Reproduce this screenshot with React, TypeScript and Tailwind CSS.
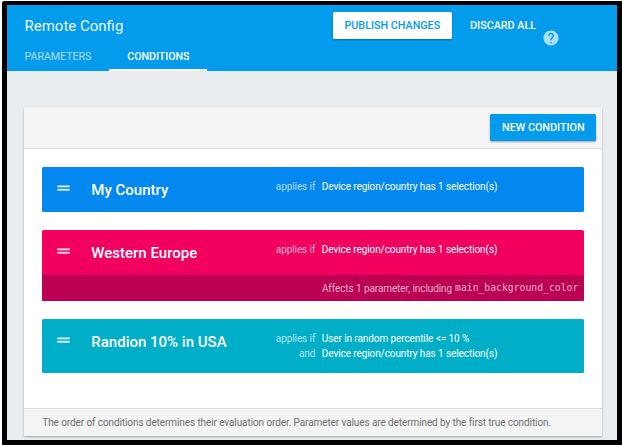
import React from "react";

type Clause = { lead: string; text: string };

type Condition = {
  name: string;
  tone: string;
  height: string;
  clauses: Clause[];
  affects?: string;
};

const conditions: Condition[] = [
  {
    name: "My Country",
    tone: "bg-[#0288ee]",
    height: "h-[45px]",
    clauses: [{ lead: "applies if", text: "Device region/country has 1 selection(s)" }],
  },
  {
    name: "Western Europe",
    tone: "bg-[#f1005f]",
    height: "h-[45px]",
    clauses: [{ lead: "applies if", text: "Device region/country has 1 selection(s)" }],
    affects: "main_background_color",
  },
  {
    name: "Randion 10% in USA",
    tone: "bg-[#00aec8]",
    height: "h-[54px]",
    clauses: [
      { lead: "applies if", text: "User in random percentile <= 10 %" },
      { lead: "and", text: "Device region/country has 1 selection(s)" },
    ],
  },
];

function DragHandle() {
  return (
    <svg className="mt-[18px] ml-[15px] h-[7px] w-[13px] shrink-0" viewBox="0 0 13 7" fill="white" fillOpacity="0.85">
      <rect x="0.3" y="0.4" width="12.4" height="1.9" />
      <rect x="0.3" y="3.8" width="12.4" height="1.9" />
    </svg>
  );
}

function ConditionRow({ item }: { item: Condition }) {
  return (
    <div className={`overflow-hidden rounded-[1.5px] text-white ${item.tone}`}>
      <div className={`flex ${item.height}`}>
        <DragHandle />
        <div className="mt-[13px] ml-[21px] w-[170px] text-[15px] leading-5 font-medium whitespace-nowrap">
          {item.name}
        </div>
        <div className="mt-[12px] flex-1">
          {item.clauses.map((c) => (
            <div
              key={c.lead}
              className="flex h-[15px] gap-[6.5px] text-[10px] leading-[15px] tracking-[-0.09px] whitespace-nowrap"
            >
              <span className="w-[54px] text-right text-white/70">{c.lead}</span>
              <span>{c.text}</span>
            </div>
          ))}
        </div>
      </div>
      {item.affects && (
        <div className="flex h-[25.5px] items-center justify-end gap-[3px] bg-[#bc0054] pt-px pr-[6px] text-[10px] whitespace-nowrap text-white/70">
          <span className="tracking-[-0.09px]">Affects 1 parameter, including</span>
          <span className="font-['DejaVu_Sans_Mono',monospace] text-[9.75px]">{item.affects}</span>
        </div>
      )}
    </div>
  );
}

export default function App() {
  return (
    <div className="h-[445px] w-[622px] bg-white pt-px pl-[2px] font-[Roboto,sans-serif]">
      <div className="h-[444px] w-[620px] rounded-tl-[2px] border-t-4 border-r-[5px] border-b-[5px] border-l-[5px] border-black bg-[#e9edf0]">
        <header className="flex h-[66px] justify-between bg-[#039cec]">
          <div>
            <h1 className="mt-[11px] ml-[17.5px] text-[15px] leading-5 text-white/95">Remote Config</h1>
            <nav className="mt-[11px] flex h-[24px] text-[10.6px] leading-[20px]">
              <span className="w-[102.4px] pl-[17.5px] text-white/65">PARAMETERS</span>
              <span className="w-[98px] border-b-2 border-white text-center font-medium text-white">CONDITIONS</span>
            </nav>
          </div>
          <div className="flex pr-[57px] text-[10.75px] font-medium">
            <button className="mt-[7px] h-[27px] w-[119.5px] rounded-[1.5px] bg-white pt-[2px] text-[#039cec] shadow-[0_1px_2px_rgba(0,0,0,0.3)]">
              PUBLISH CHANGES
            </button>
            <button className="mt-[7px] ml-[18px] h-[27px] pt-[2px] text-white">DISCARD ALL</button>
            <svg className="mt-[23.5px] ml-[6px] h-[18px] w-[18px]" viewBox="0 0 24 24" fill="#ace0f9">
              <path d="M12 2C6.48 2 2 6.48 2 12s4.48 10 10 10 10-4.48 10-10S17.52 2 12 2zm1 17h-2v-2h2v2zm2.07-7.75l-.9.92C13.45 12.9 13 13.5 13 15h-2v-.5c0-1.1.45-2.1 1.17-2.83l1.24-1.26c.37-.36.59-.86.59-1.41 0-1.1-.9-2-2-2s-2 .9-2 2H8c0-2.21 1.79-4 4-4s4 1.79 4 4c0 .88-.36 1.68-.93 2.25z" />
            </svg>
          </div>
        </header>
        <main className="mt-[36px] ml-[17.3px] h-[329px] w-[578px] bg-white shadow-[0_1px_2px_rgba(0,0,0,0.3)]">
          <div className="flex h-[42px] justify-end border-b border-[#dedede] bg-[#f4f4f4] pt-[7px] pr-[6px]">
            <button className="h-[27px] w-[106px] rounded-[1.5px] bg-[#039cec] pt-[2px] text-[10.75px] font-medium text-white shadow-[0_1px_2px_rgba(0,0,0,0.35)]">
              NEW CONDITION
            </button>
          </div>
          <div className="flex h-[259px] flex-col gap-[18.2px] pt-[18px] pr-[18px] pl-[18px]">
            {conditions.map((item) => (
              <ConditionRow key={item.name} item={item} />
            ))}
          </div>
          <footer className="h-[28px] border-t border-[#dedede] bg-[#f4f4f4] pl-[18px] text-[10px] leading-[28px] tracking-[-0.095px] whitespace-nowrap text-[#707070]">
            The order of conditions determines their evaluation order. Parameter values are determined by the first true
            condition.
          </footer>
        </main>
      </div>
    </div>
  );
}
